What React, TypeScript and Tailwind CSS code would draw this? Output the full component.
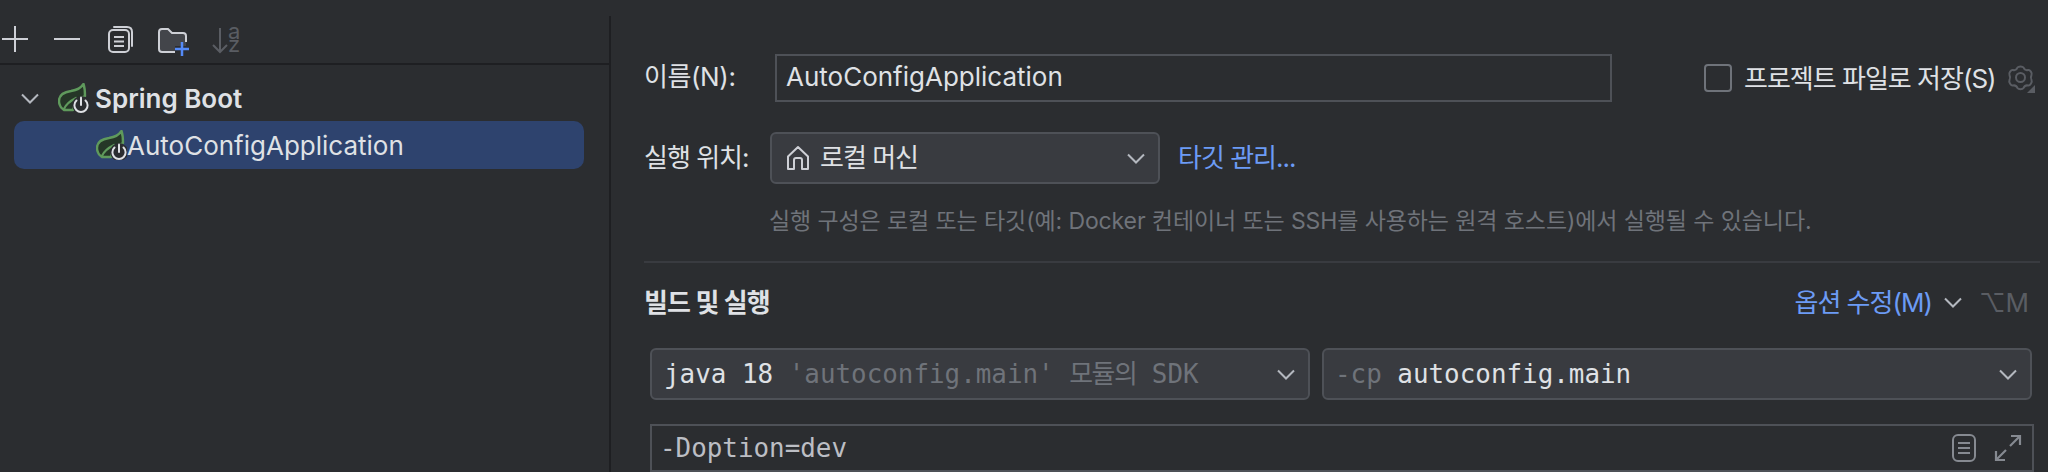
const sans = "font-['Inter','Noto_Sans_CJK_KR',sans-serif]";
const mono = "font-['DejaVu_Sans_Mono','Noto_Sans_CJK_KR',monospace] text-[25.900px]";

function Chevron({ className }: { className?: string }) {
  return (
    <svg width="18" height="11" viewBox="0 0 18 11" fill="none" className={`shrink-0 ${className ?? ''}`}>
      <path d="M1 1.500L9 9.500L17 1.500" stroke="#b4b8bf" strokeWidth="2" />
    </svg>
  );
}

// Spring Boot run configuration icon: leaf with a power badge
function SpringIcon() {
  return (
    <svg width="31" height="30" viewBox="0 0 31 30" fill="none" className="shrink-0">
      <path
        d="M25.500 1C23 5 19 7 13 8C6 9 1 12 1 18C1 22 3 25 6 27H15L17 18L27 13C27 8 26.500 4 25.500 1Z"
        fill="#253627"
        stroke="#5f9a5c"
        strokeWidth="2.400"
        strokeLinejoin="round"
      />
      <path d="M6 26C8 21 12 18 18 15" stroke="#5f9a5c" strokeWidth="2.200" strokeLinecap="round" />
      <circle cx="23" cy="22" r="9" fill="#2b2d30" />
      <path d="M18.500 17.500A6.600 6.600 0 1 0 27.500 17.500" stroke="#dfe1e5" strokeWidth="2" strokeLinecap="round" />
      <path d="M23 14.500V22" stroke="#dfe1e5" strokeWidth="2" strokeLinecap="round" />
    </svg>
  );
}

function Toolbar() {
  return (
    <div className="flex h-[65px] items-start border-b-2 border-[#1e1f22] pt-[26px]">
      <svg width="227" height="31" viewBox="0 0 227 31" fill="none" className="ml-[1px] shrink-0">
        {/* add / remove */}
        <path d="M1 13H27M14 0V26" stroke="#ced0d6" strokeWidth="2" />
        <path d="M53 13H79" stroke="#ced0d6" strokeWidth="2" />
        {/* copy */}
        <rect x="108" y="4" width="20" height="22" rx="4" stroke="#ced0d6" strokeWidth="2" />
        <path d="M113 1H126C129 1 131 3 131 6V20" stroke="#ced0d6" strokeWidth="2" strokeLinecap="round" />
        <path d="M113 11H123M113 15.500H123M113 20H123" stroke="#ced0d6" strokeWidth="2" />
        {/* new folder */}
        <path
          d="M158 6C158 4 159 3 161 3H167L171 7H182C184 7 185 8 185 10V20H174V26H161C159 26 158 25 158 23Z"
          fill="#43454a"
        />
        <path
          d="M174 26H161C159 26 158 25 158 23V6C158 4 159 3 161 3H167L171 7H182C184 7 185 8 185 10V16"
          stroke="#ced0d6"
          strokeWidth="2"
        />
        <path d="M174 23H188M181 16V30" stroke="#548af7" strokeWidth="2.500" />
        {/* sort arrow */}
        <path d="M219 2V26M212 19L219 26L226 19" stroke="#5a5d63" strokeWidth="2" />
      </svg>
      <div className="-mt-[1px] whitespace-pre-line font-['Inter',sans-serif] text-[22px] leading-[13px] text-[#5a5d63]">
        {'a\nz'}
      </div>
    </div>
  );
}

function Sidebar() {
  return (
    <div className={`relative flex w-[611px] shrink-0 flex-col ${sans}`}>
      <div className="absolute top-[16px] right-0 bottom-0 w-[2px] bg-[#1e1f22]" />
      <Toolbar />
      <div className="flex h-[56px] items-center pt-[10px] pl-[21px]">
        <Chevron className="mr-[19px]" />
        <SpringIcon />
        <span className="ml-[6px] text-[26px] font-semibold text-[#dfe1e5]">Spring Boot</span>
      </div>
      <div className="mr-[27px] ml-[14px] flex h-[48px] items-center rounded-[10px] bg-[#2e436e] pl-[82px]">
        <SpringIcon />
        <span className="text-[26px] text-[#dfe1e5]">AutoConfigApplication</span>
      </div>
    </div>
  );
}

function Select({ children, className }: { children: React.ReactNode; className: string }) {
  return (
    <div className={`flex h-[52px] items-center justify-between rounded-[6px] border-2 border-[#4e5157] bg-[#393b40] ${className}`}>
      {children}
      <Chevron className="mr-[13px]" />
    </div>
  );
}

function Form() {
  return (
    <div className={`flex min-w-0 flex-1 flex-col pr-[8px] pl-[33px] text-[26px] text-[#dfe1e5] ${sans}`}>
      {/* name row */}
      <div className="mt-[54px] flex h-[48px] items-center">
        <span className="w-[131px] shrink-0 pb-[3px] tracking-[-0.4px]">이름(N):</span>
        <div className="flex h-[48px] w-[837px] shrink-0 items-center border-2 border-[#4e5157] pb-[4px] pl-[9px]">
          AutoConfigApplication
        </div>
        <div className="ml-[92px] h-[28px] w-[28px] shrink-0 rounded-[4px] border-2 border-[#6f737a]" />
        <span className="ml-[12px] whitespace-nowrap tracking-[-1px]">프로젝트 파일로 저장(S)</span>
        <svg width="30" height="30" viewBox="0 0 30 30" fill="none" className="ml-[10px] shrink-0">
          <path
            d="M11.500 2.500C12.500 1 16.500 1 17.500 2.500C18.500 5 20 5.500 22 5C24 4.500 26.500 8 25.500 10C24.500 12 24.500 13 25.500 15C26.500 17 24 21 22 20.500C20 20 18.500 21 17.500 23C16.500 24.500 12.500 24.500 11.500 23C10.500 21 9 20 7 20.500C5 21 2.500 17 3.500 15C4.500 13 4.500 12 3.500 10C2.500 8 5 4.500 7 5C9 5.500 10.500 5 11.500 2.500Z"
            stroke="#5a5d63"
            strokeWidth="2"
            transform="translate(0 2)"
          />
          <circle cx="14.500" cy="14.500" r="4.500" stroke="#5a5d63" strokeWidth="2" />
          <path d="M29 22V30H21Z" fill="#5a5d63" />
        </svg>
      </div>

      {/* run on row */}
      <div className="mt-[30px] flex h-[52px] items-center">
        <span className="w-[126px] shrink-0 pb-[2px] tracking-[-1px]">실행 위치:</span>
        <Select className="w-[390px] shrink-0">
          <div className="flex items-center pl-[13px]">
            <svg width="26" height="26" viewBox="0 0 26 26" fill="none">
              <path
                d="M3 24V11.500L13 2L23 11.500V24H17V15C17 13.500 16 13 15 13H11C10 13 9 13.500 9 15V24Z"
                stroke="#ced0d6"
                strokeWidth="2"
                strokeLinejoin="round"
              />
            </svg>
            <span className="ml-[9px] pb-[2px] tracking-[-1px]">로컬 머신</span>
          </div>
        </Select>
        <span className="ml-[18px] pb-[2px] tracking-[-1px] text-[#6c9bf5]">타깃 관리...</span>
      </div>

      {/* hint */}
      <div className="mt-[21px] h-[33px] pl-[125px] text-[23px] leading-[32px] tracking-[-0.1px] whitespace-nowrap text-[#6f737a]">
        실행 구성은 로컬 또는 타깃(예: Docker 컨테이너 또는 SSH를 사용하는 원격 호스트)에서 실행될 수 있습니다.
      </div>

      <div className="mt-[23px] h-[2px] bg-[#393b40]" />

      {/* build and run header */}
      <div className="mt-[24px] flex h-[32px] items-center pb-[2px]">
        <span className="font-semibold tracking-[-1px]">빌드 및 실행</span>
        <div className="ml-auto flex items-center">
          <span className="tracking-[-1px] text-[#6c9bf5]">옵션 수정(M)</span>
          <Chevron className="ml-[12px]" />
          <span className="mr-[11px] ml-[17px] text-[#5a5d63]">⌥M</span>
        </div>
      </div>

      {/* sdk and classpath */}
      <div className="mt-[29px] flex gap-[12px] pr-[8px] pl-[6px]">
        <Select className="w-[660px] shrink-0">
          <span className={`pl-[12px] whitespace-pre ${mono}`}>
            java 18 <span className="text-[#6f737a]">'autoconfig.main' <span className="tracking-[-1.500px]">모듈의</span> SDK</span>
          </span>
        </Select>
        <Select className="flex-1">
          <span className={`pl-[11px] whitespace-pre ${mono}`}>
            <span className="text-[#6f737a]">-cp </span>autoconfig.main
          </span>
        </Select>
      </div>

      {/* vm options */}
      <div className="mt-[24px] mr-[6px] ml-[6px] flex h-[48px] shrink-0 items-center justify-between border-2 border-[#4e5157] pl-[8px]">
        <span className={`text-[#bcbec4] ${mono}`}>-Doption=dev</span>
        <div className="mr-[10px] flex items-center gap-[18px]">
          <svg width="24" height="28" viewBox="0 0 24 28" fill="none">
            <rect x="1" y="1" width="22" height="26" rx="5" stroke="#868a91" strokeWidth="2" />
            <path d="M6 9H18M6 14H18M6 19H18" stroke="#868a91" strokeWidth="2" />
          </svg>
          <svg width="28" height="28" viewBox="0 0 28 28" fill="none">
            <path d="M17 2H26V11M26 2L16 12M2 17V26H11M2 26L12 16" stroke="#868a91" strokeWidth="2.200" />
          </svg>
        </div>
      </div>
    </div>
  );
}

export default function App() {
  return (
    <div className="flex h-[472px] w-[2048px] overflow-hidden bg-[#2b2d30]">
      <Sidebar />
      <Form />
    </div>
  );
}
